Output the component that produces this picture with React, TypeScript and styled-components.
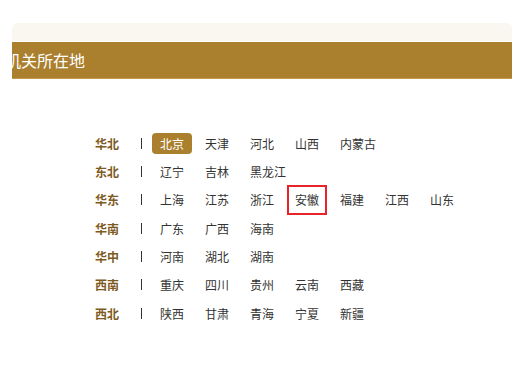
import React from 'react';
import styled, { createGlobalStyle } from 'styled-components';

const GlobalStyle = createGlobalStyle`
  body {
    margin: 0;
    background: #ffffff;
    font-family: "Microsoft YaHei", "Noto Sans CJK SC", "Liberation Sans", sans-serif;
  }
`;

type Region = {
  name: string;
  places: string[];
};

const REGIONS: Region[] = [
  { name: '华北', places: ['北京', '天津', '河北', '山西', '内蒙古'] },
  { name: '东北', places: ['辽宁', '吉林', '黑龙江'] },
  { name: '华东', places: ['上海', '江苏', '浙江', '安徽', '福建', '江西', '山东'] },
  { name: '华南', places: ['广东', '广西', '海南'] },
  { name: '华中', places: ['河南', '湖北', '湖南'] },
  { name: '西南', places: ['重庆', '四川', '贵州', '云南', '西藏'] },
  { name: '西北', places: ['陕西', '甘肃', '青海', '宁夏', '新疆'] },
];

const ACTIVE = '北京';
const FOCUSED = '安徽';

function App() {
  return (
    <>
      <GlobalStyle />
      <Panel>
        <PanelTop />
        <TitleBar>
          <Title>机关所在地</Title>
        </TitleBar>
        <List>
          {REGIONS.map((region) => (
            <Row key={region.name}>
              <Label>{region.name}</Label>
              <Divider />
              <Places>
                {region.places.map((place) => (
                  <Place
                    key={place}
                    $active={place === ACTIVE}
                    $focused={place === FOCUSED}
                  >
                    {place}
                  </Place>
                ))}
              </Places>
            </Row>
          ))}
        </List>
      </Panel>
    </>
  );
}

export default App;

const Panel = styled.div`
  width: 500px;
  margin: 23px 0 0 12px;
  overflow: hidden;
`;

const PanelTop = styled.div`
  height: 18px;
  background: #faf7f0;
  border-radius: 6px 6px 0 0;
  border-bottom: 1px solid #ffffff;
`;

const TitleBar = styled.div`
  height: 36px;
  background: #aa802e;
  border-bottom: 1px solid #c49a48;
  display: flex;
  align-items: center;
`;

const Title = styled.span`
  margin-left: -7px;
  color: #ffffff;
  font-size: 16px;
  white-space: nowrap;
`;

const List = styled.div`
  padding: 50px 0 0 83px;
  display: flex;
  flex-direction: column;
`;

const Row = styled.div`
  height: 28.33px;
  display: flex;
  align-items: center;
`;

const Label = styled.span`
  width: 46px;
  font-size: 12px;
  font-weight: bold;
  color: #7d5a1e;
`;

const Divider = styled.span`
  width: 1px;
  height: 11px;
  background: #333333;
  margin-right: 10px;
`;

const Places = styled.div`
  display: flex;
  align-items: center;
  gap: 5px;
`;

const Place = styled.span<{ $active?: boolean; $focused?: boolean }>`
  box-sizing: border-box;
  min-width: 40px;
  padding: 0 ${(p) => (p.$focused ? '6px' : '8px')};
  height: ${(p) => (p.$focused ? '30px' : '21px')};
  display: flex;
  align-items: center;
  justify-content: center;
  font-size: 12px;
  color: ${(p) => (p.$active ? '#ffffff' : '#333333')};
  background: ${(p) => (p.$active ? '#aa802e' : 'transparent')};
  border-radius: ${(p) => (p.$active ? '4px' : '0')};
  border: ${(p) => (p.$focused ? '2px solid #e8242b' : 'none')};
  white-space: nowrap;
`;
